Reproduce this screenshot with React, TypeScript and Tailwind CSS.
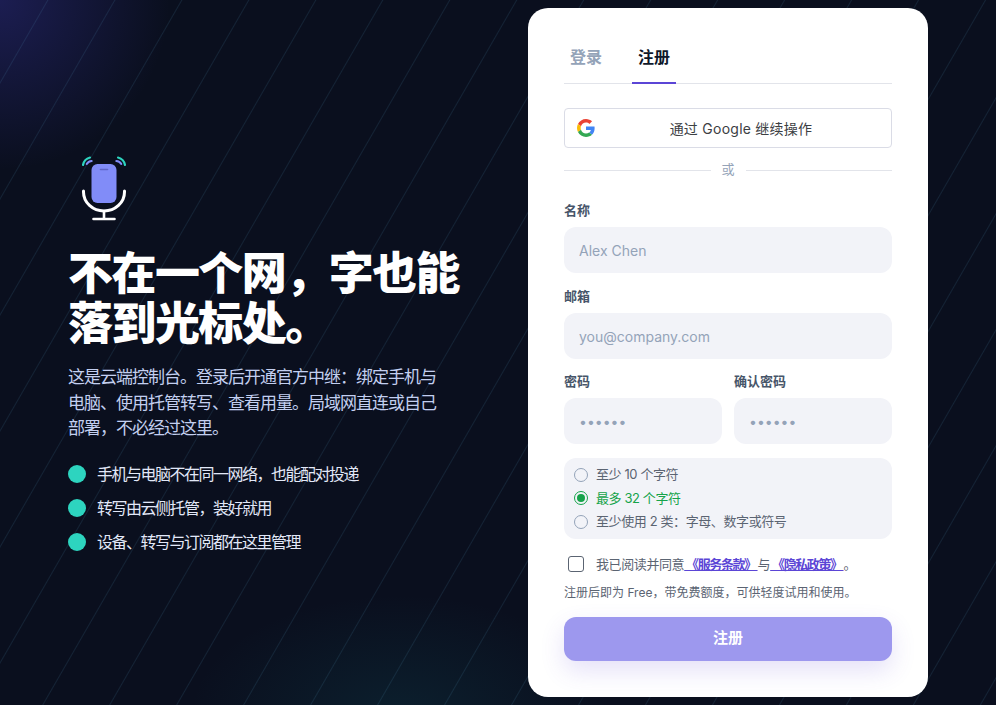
import React from "react";

function Field({ label, placeholder }: { label: string; placeholder: string }) {
  return (
    <label className="block min-w-0">
      <span className="block text-[13px] leading-[16px] font-semibold text-[#475569]">{label}</span>
      <input
        type="text"
        placeholder={placeholder}
        readOnly
        className="mt-[9px] block h-[46px] w-full rounded-[12px] bg-[#f2f3f8] px-[15px] text-[14px] outline-none placeholder:text-[#94a3b8]"
      />
    </label>
  );
}

function Rule({ text, on }: { text: string; on?: boolean }) {
  return (
    <div className={`flex h-[23.67px] items-center gap-[8px] text-[13px] tracking-[-0.4px] ${on ? "text-[#16a34a]" : "text-[#5b6472]"}`}>
      {on ? (
        <span className="flex size-[14px] items-center justify-center rounded-full border border-[#16a34a]">
          <span className="size-[8px] rounded-full bg-[#16a34a]" />
        </span>
      ) : (
        <span className="size-[14px] rounded-full border border-[#94a3b8]" />
      )}
      <span>{text}</span>
    </div>
  );
}

function Logo() {
  return (
    <svg width="72" height="72" viewBox="0 0 72 72" fill="none" className="block">
      <path d="M15 13a9.500 9.500 0 0 1 7-7.500M57 13a9.500 9.500 0 0 0-7-7.500" stroke="#2dd4bf" strokeWidth="2.200" strokeLinecap="round" />
      <path d="M18.700 12a6.500 6.500 0 0 1 5-3M53.300 12a6.500 6.500 0 0 0-5-3" stroke="#818cf8" strokeWidth="2" strokeLinecap="round" />
      <rect x="23.500" y="12" width="25" height="39" rx="6" fill="#818cf8" />
      <path d="M32.500 17.500h7" stroke="#5f66c8" strokeWidth="1.600" strokeLinecap="round" />
      <path d="M15.500 39v1a20.500 19 0 0 0 41 0v-1" stroke="#fff" strokeWidth="3" strokeLinecap="round" />
      <path d="M36 59v8M25.500 67h21" stroke="#fff" strokeWidth="2.600" strokeLinecap="round" />
    </svg>
  );
}

function GoogleIcon() {
  return (
    <svg width="18" height="18" viewBox="0 0 48 48" className="shrink-0">
      <path fill="#EA4335" d="M24 9.500c3.540 0 6.710 1.220 9.210 3.600l6.850-6.850C35.900 2.380 30.470 0 24 0 14.620 0 6.510 5.380 2.560 13.220l7.980 6.190C12.430 13.720 17.740 9.500 24 9.500z" />
      <path fill="#4285F4" d="M46.980 24.550c0-1.570-.15-3.090-.38-4.550H24v9.020h12.940c-.58 2.960-2.260 5.480-4.780 7.180l7.730 6c4.510-4.180 7.090-10.360 7.090-17.650z" />
      <path fill="#FBBC05" d="M10.530 28.590c-.48-1.450-.76-2.990-.76-4.590s.27-3.140.76-4.590l-7.980-6.190C.92 16.460 0 20.120 0 24c0 3.880.92 7.540 2.560 10.780l7.970-6.190z" />
      <path fill="#34A853" d="M24 48c6.480 0 11.930-2.130 15.890-5.810l-7.730-6c-2.150 1.450-4.920 2.300-8.160 2.300-6.260 0-11.570-4.220-13.470-9.910l-7.980 6.190C6.510 42.620 14.620 48 24 48z" />
    </svg>
  );
}

export default function App() {
  return (
    <div className="relative flex h-[705px] w-full overflow-hidden bg-[#0a0f1e] font-['Inter','Noto_Sans_CJK_SC',sans-serif]">
      <div className="pointer-events-none absolute inset-0 bg-[radial-gradient(circle_at_0px_0px,rgba(79,70,229,0.26),transparent_170px),radial-gradient(ellipse_210px_120px_at_400px_715px,rgba(20,130,140,0.14),transparent_100%)]" />
      <div className="pointer-events-none absolute inset-0 bg-[repeating-linear-gradient(120deg,transparent_0px,transparent_40.5px,rgba(90,170,210,0.13)_41.5px,transparent_42.5px,transparent_58px)]" />

      <section className="relative flex min-w-0 flex-1 flex-col justify-center pb-[2px] pl-[68px]">
        <Logo />
        <h1 className="mt-[25px] text-[45px] leading-[50px] font-black tracking-[-1.55px] text-white">
          不在一个网，字也能
          <br />
          落到光标处。
        </h1>
        <p className="mt-[16px] w-[380px] text-[17px] leading-[25.6px] tracking-[-1px] text-[#c3cff0]">
          这是云端控制台。登录后开通官方中继：绑定手机与电脑、使用托管转写、查看用量。局域网直连或自己部署，不必经过这里。
        </p>
        <ul className="mt-[23px] flex flex-col gap-[16px] text-[16px] leading-[18px] tracking-[-1.5px] text-[#e2e8f8]">
          {["手机与电脑不在同一网络，也能配对投递", "转写由云侧托管，装好就用", "设备、转写与订阅都在这里管理"].map((t) => (
            <li key={t} className="flex items-center gap-[11px]">
              <span className="size-[18px] rounded-full bg-[#2dd4bf]" />
              {t}
            </li>
          ))}
        </ul>
      </section>

      <div className="relative flex items-center pr-[68px]">
        <main className="h-[689px] w-[400px] rounded-[20px] bg-white px-[36px] pt-[30px]">
          <div className="flex gap-[24px] border-b border-[#e2e4ea] text-[16px] font-semibold">
            <div className="h-[45px] w-[44px] pt-[9px] text-center leading-[20px] text-[#94a3b8]">登录</div>
            <div className="-mb-px h-[46px] w-[44px] border-b-2 border-[#5b45d6] pt-[9px] text-center leading-[20px] text-[#0f172a]">注册</div>
          </div>

          <button className="mt-[24px] flex h-[40px] w-full items-center gap-[8px] rounded-[4px] border border-[#dadce6] bg-white px-[12px] text-[14px] tracking-[0.25px] text-[#3c4043]">
            <GoogleIcon />
            <span className="flex-1 text-center">通过 Google 继续操作</span>
          </button>

          <div className="mt-[12px] flex h-[20px] items-center gap-[11px] text-[13px] text-[#94a3b8]">
            <span className="h-px flex-1 bg-[#e2e4ea]" />
            或
            <span className="h-px flex-1 bg-[#e2e4ea]" />
          </div>

          <div className="mt-[22px]">
            <Field label="名称" placeholder="Alex Chen" />
          </div>
          <div className="mt-[15px]">
            <Field label="邮箱" placeholder="you@company.com" />
          </div>
          <div className="mt-[14px] grid grid-cols-2 gap-[12px]">
            <Field label="密码" placeholder="••••••" />
            <Field label="确认密码" placeholder="••••••" />
          </div>

          <div className="mt-[14px] rounded-[12px] bg-[#f2f3f8] px-[10px] py-[5px]">
            <Rule text="至少 10 个字符" />
            <Rule text="最多 32 个字符" on />
            <Rule text="至少使用 2 类：字母、数字或符号" />
          </div>

          <div className="mt-[15px] flex items-center gap-[12px] pl-[4px] text-[13px] leading-[20px] tracking-[-0.4px] text-[#5b6472]">
            <span className="size-[16px] rounded-[3px] border border-[#5b6472] bg-white" />
            <span>
              我已阅读并同意
              <a className="font-semibold tracking-[-1.4px] text-[#5b45d6] underline"> 《服务条款》 </a>
              与
              <a className="font-semibold tracking-[-1.4px] text-[#5b45d6] underline"> 《隐私政策》 </a>
              。
            </span>
          </div>

          <p className="mt-[10px] text-[12px] leading-[18px] text-[#5b6472]">注册后即为 Free，带免费额度，可供轻度试用和使用。</p>

          <button className="mt-[15px] h-[44px] w-full rounded-[12px] bg-[#9d98ee] pb-[1px] text-[15px] font-bold text-white shadow-[0_10px_24px_rgba(91,69,214,0.16)]">
            注册
          </button>
        </main>
      </div>
    </div>
  );
}
